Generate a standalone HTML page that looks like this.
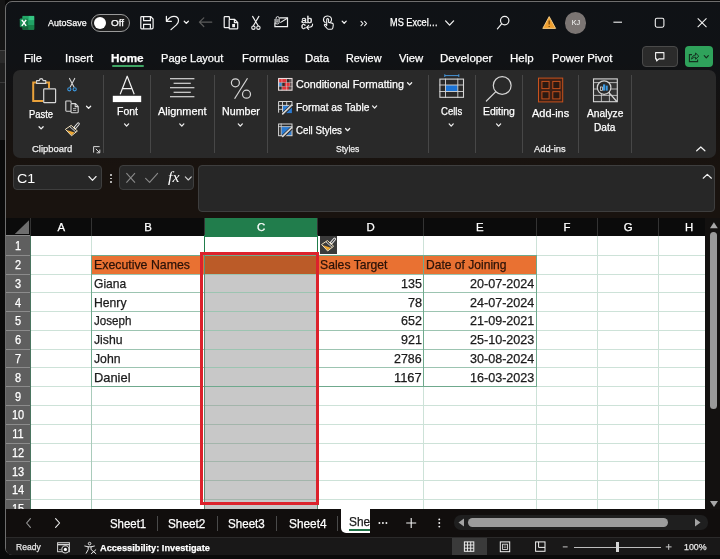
<!DOCTYPE html>
<html><head><meta charset="utf-8"><title>Excel</title>
<style>
html,body{margin:0;padding:0}
body{width:720px;height:559px;overflow:hidden;position:relative;background:#0a0a0a;font-family:"Liberation Sans",sans-serif}
.a{position:absolute}
.t{-webkit-text-stroke:0.25px currentColor;position:absolute;white-space:nowrap;line-height:1;transform-origin:0 50%;display:block}
svg{position:absolute;overflow:visible}
.win{left:4.5px;top:1px;width:730px;height:554px;background:linear-gradient(to bottom,#0f1216 0,#101215 60px,#15110f 120px,#19130f 165px,#19130f 100%);border:1px solid #6e6e6e;border-radius:7px;box-sizing:border-box}
.ribbon{left:12.5px;top:70px;width:703px;height:87.6px;background:#292929;border-radius:7px}
.sep{width:1px;background:#474747;top:75px;height:77.5px}
.box{background:#272727;border:1px solid #3e3e3e;border-radius:4px;box-sizing:border-box}
.gl{background:#cfe3da}
.gd{background:#7fb09a}

</style></head><body>
<div class="a " style="left:0.00px;top:0.00px;width:4.50px;height:50.00px;background:#151515;"></div>
<div class="a " style="left:0.00px;top:50.00px;width:4.50px;height:13.00px;background:#2a2a2a;"></div>
<div class="a " style="left:0.00px;top:63.00px;width:4.50px;height:77.00px;background:#1f1f1f;"></div>
<div class="a " style="left:0.00px;top:82.00px;width:4.50px;height:0.80px;background:#3a3a3a;"></div>
<div class="a " style="left:0.00px;top:50.00px;width:4.50px;height:0.80px;background:#444;"></div>
<div class="a win"></div>
<div class="a ribbon"></div>
<div class="a sep" style="left:102.7px"></div>
<div class="a sep" style="left:150.2px"></div>
<div class="a sep" style="left:213.7px"></div>
<div class="a sep" style="left:267.0px"></div>
<div class="a sep" style="left:427.5px"></div>
<div class="a sep" style="left:475.0px"></div>
<div class="a sep" style="left:522.0px"></div>
<div class="a sep" style="left:577.7px"></div>
<div class="a sep" style="left:631.3px"></div>
<div class="a " style="left:111.60px;top:65.10px;width:32.90px;height:2.30px;background:#3fa564;border-radius:1.2px"></div>
<div class="a" style="left:91.2px;top:14.3px;width:38.8px;height:17.6px;border:1.3px solid #9a9a9a;border-radius:9px;box-sizing:border-box;background:#1c1c1c"></div>
<div class="a" style="left:94px;top:17px;width:12.4px;height:12.4px;border-radius:50%;background:#fff"></div>
<div class="a" style="left:564.8px;top:12.3px;width:21.4px;height:21.4px;border-radius:50%;background:#7b7573"></div>
<div class="a" style="left:641.7px;top:46.3px;width:36px;height:21.2px;border-radius:4px;background:#2b2b2b;border:1px solid #4a4a4a;box-sizing:border-box"></div>
<div class="a" style="left:685px;top:46.3px;width:27.5px;height:21.2px;border-radius:4px;background:#2fa25b"></div>
<div class="a box" style="left:12.7px;top:165px;width:89px;height:25px"></div>
<div class="a box" style="left:119.3px;top:165px;width:75px;height:25px"></div>
<div class="a box" style="left:198.3px;top:165px;width:517.2px;height:46.5px"></div>
<div class="a " style="left:110.00px;top:174.30px;width:1.60px;height:1.60px;background:#d0d0d0;border-radius:50%"></div>
<div class="a " style="left:110.00px;top:177.80px;width:1.60px;height:1.60px;background:#d0d0d0;border-radius:50%"></div>
<div class="a " style="left:110.00px;top:181.30px;width:1.60px;height:1.60px;background:#d0d0d0;border-radius:50%"></div>
<div class="a " style="left:6.00px;top:217.60px;width:714.00px;height:291.60px;background:#fff;"></div>
<div class="a " style="left:6.00px;top:217.60px;width:714.00px;height:18.00px;background:#0b0b0b;"></div>
<div class="a " style="left:204.30px;top:217.60px;width:113.40px;height:18.00px;background:#217d4c;"></div>
<div class="a " style="left:30.20px;top:217.60px;width:1.00px;height:18.00px;background:#333;"></div>
<div class="a " style="left:91.20px;top:217.60px;width:1.00px;height:18.00px;background:#333;"></div>
<div class="a " style="left:203.80px;top:217.60px;width:1.00px;height:18.00px;background:#333;"></div>
<div class="a " style="left:317.20px;top:217.60px;width:1.00px;height:18.00px;background:#333;"></div>
<div class="a " style="left:423.00px;top:217.60px;width:1.00px;height:18.00px;background:#333;"></div>
<div class="a " style="left:535.90px;top:217.60px;width:1.00px;height:18.00px;background:#333;"></div>
<div class="a " style="left:597.30px;top:217.60px;width:1.00px;height:18.00px;background:#333;"></div>
<div class="a " style="left:658.20px;top:217.60px;width:1.00px;height:18.00px;background:#333;"></div>
<svg style="left:14px;top:219px" width="16" height="16" viewBox="14 219 16 16"><path d="M14.8 233.9 L29 233.9 L29 220.3 Z" fill="#6e6e6e"/></svg>
<div class="a " style="left:6.00px;top:235.60px;width:24.40px;height:273.60px;background:#5f5f5f;"></div>
<div class="a " style="left:6.00px;top:235.20px;width:24.40px;height:0.90px;background:#8a8a8a;"></div>
<div class="a " style="left:6.00px;top:254.78px;width:24.40px;height:1.00px;background:#8c8c8c;"></div>
<div class="a " style="left:6.00px;top:273.56px;width:24.40px;height:1.00px;background:#8c8c8c;"></div>
<div class="a " style="left:6.00px;top:292.34px;width:24.40px;height:1.00px;background:#8c8c8c;"></div>
<div class="a " style="left:6.00px;top:311.12px;width:24.40px;height:1.00px;background:#8c8c8c;"></div>
<div class="a " style="left:6.00px;top:329.90px;width:24.40px;height:1.00px;background:#8c8c8c;"></div>
<div class="a " style="left:6.00px;top:348.68px;width:24.40px;height:1.00px;background:#8c8c8c;"></div>
<div class="a " style="left:6.00px;top:367.46px;width:24.40px;height:1.00px;background:#8c8c8c;"></div>
<div class="a " style="left:6.00px;top:386.24px;width:24.40px;height:1.00px;background:#8c8c8c;"></div>
<div class="a " style="left:6.00px;top:405.02px;width:24.40px;height:1.00px;background:#8c8c8c;"></div>
<div class="a " style="left:6.00px;top:423.80px;width:24.40px;height:1.00px;background:#8c8c8c;"></div>
<div class="a " style="left:6.00px;top:442.58px;width:24.40px;height:1.00px;background:#8c8c8c;"></div>
<div class="a " style="left:6.00px;top:461.36px;width:24.40px;height:1.00px;background:#8c8c8c;"></div>
<div class="a " style="left:6.00px;top:480.14px;width:24.40px;height:1.00px;background:#8c8c8c;"></div>
<div class="a " style="left:6.00px;top:498.92px;width:24.40px;height:1.00px;background:#8c8c8c;"></div>
<div class="a " style="left:30.20px;top:235.60px;width:1.00px;height:273.60px;background:#4a7560;"></div>
<div class="a " style="left:91.70px;top:255.28px;width:112.60px;height:18.78px;background:#e97132;"></div>
<div class="a " style="left:317.70px;top:255.28px;width:218.70px;height:18.78px;background:#e97132;"></div>
<div class="a " style="left:204.30px;top:255.28px;width:113.40px;height:18.78px;background:#bb5b28;"></div>
<div class="a " style="left:204.30px;top:274.06px;width:113.40px;height:235.14px;background:#c8c8c8;"></div>
<div class="a " style="left:30.70px;top:254.78px;width:675.30px;height:1.00px;background:#cde2d8;"></div>
<div class="a " style="left:30.70px;top:273.56px;width:675.30px;height:1.00px;background:#cde2d8;"></div>
<div class="a " style="left:30.70px;top:292.34px;width:675.30px;height:1.00px;background:#cde2d8;"></div>
<div class="a " style="left:30.70px;top:311.12px;width:675.30px;height:1.00px;background:#cde2d8;"></div>
<div class="a " style="left:30.70px;top:329.90px;width:675.30px;height:1.00px;background:#cde2d8;"></div>
<div class="a " style="left:30.70px;top:348.68px;width:675.30px;height:1.00px;background:#cde2d8;"></div>
<div class="a " style="left:30.70px;top:367.46px;width:675.30px;height:1.00px;background:#cde2d8;"></div>
<div class="a " style="left:30.70px;top:386.24px;width:675.30px;height:1.00px;background:#cde2d8;"></div>
<div class="a " style="left:30.70px;top:405.02px;width:675.30px;height:1.00px;background:#cde2d8;"></div>
<div class="a " style="left:30.70px;top:423.80px;width:675.30px;height:1.00px;background:#cde2d8;"></div>
<div class="a " style="left:30.70px;top:442.58px;width:675.30px;height:1.00px;background:#cde2d8;"></div>
<div class="a " style="left:30.70px;top:461.36px;width:675.30px;height:1.00px;background:#cde2d8;"></div>
<div class="a " style="left:30.70px;top:480.14px;width:675.30px;height:1.00px;background:#cde2d8;"></div>
<div class="a " style="left:30.70px;top:498.92px;width:675.30px;height:1.00px;background:#cde2d8;"></div>
<div class="a " style="left:91.20px;top:235.60px;width:1.00px;height:273.60px;background:#cde2d8;"></div>
<div class="a " style="left:203.80px;top:235.60px;width:1.00px;height:273.60px;background:#cde2d8;"></div>
<div class="a " style="left:317.20px;top:235.60px;width:1.00px;height:273.60px;background:#cde2d8;"></div>
<div class="a " style="left:423.00px;top:235.60px;width:1.00px;height:273.60px;background:#cde2d8;"></div>
<div class="a " style="left:535.90px;top:235.60px;width:1.00px;height:273.60px;background:#cde2d8;"></div>
<div class="a " style="left:597.30px;top:235.60px;width:1.00px;height:273.60px;background:#cde2d8;"></div>
<div class="a " style="left:658.20px;top:235.60px;width:1.00px;height:273.60px;background:#cde2d8;"></div>
<div class="a " style="left:204.30px;top:273.56px;width:113.40px;height:1.00px;background:#a3b5ab;"></div>
<div class="a " style="left:204.30px;top:292.34px;width:113.40px;height:1.00px;background:#a3b5ab;"></div>
<div class="a " style="left:204.30px;top:311.12px;width:113.40px;height:1.00px;background:#a3b5ab;"></div>
<div class="a " style="left:204.30px;top:329.90px;width:113.40px;height:1.00px;background:#a3b5ab;"></div>
<div class="a " style="left:204.30px;top:348.68px;width:113.40px;height:1.00px;background:#a3b5ab;"></div>
<div class="a " style="left:204.30px;top:367.46px;width:113.40px;height:1.00px;background:#a3b5ab;"></div>
<div class="a " style="left:204.30px;top:386.24px;width:113.40px;height:1.00px;background:#a3b5ab;"></div>
<div class="a " style="left:204.30px;top:405.02px;width:113.40px;height:1.00px;background:#a3b5ab;"></div>
<div class="a " style="left:204.30px;top:423.80px;width:113.40px;height:1.00px;background:#a3b5ab;"></div>
<div class="a " style="left:204.30px;top:442.58px;width:113.40px;height:1.00px;background:#a3b5ab;"></div>
<div class="a " style="left:204.30px;top:461.36px;width:113.40px;height:1.00px;background:#a3b5ab;"></div>
<div class="a " style="left:204.30px;top:480.14px;width:113.40px;height:1.00px;background:#a3b5ab;"></div>
<div class="a " style="left:204.30px;top:498.92px;width:113.40px;height:1.00px;background:#a3b5ab;"></div>
<div class="a " style="left:91.70px;top:254.78px;width:444.70px;height:1.00px;background:#6fa98d;"></div>
<div class="a " style="left:91.70px;top:273.56px;width:444.70px;height:1.00px;background:#9cc4b1;"></div>
<div class="a " style="left:91.70px;top:292.34px;width:444.70px;height:1.00px;background:#9cc4b1;"></div>
<div class="a " style="left:91.70px;top:311.12px;width:444.70px;height:1.00px;background:#9cc4b1;"></div>
<div class="a " style="left:91.70px;top:329.90px;width:444.70px;height:1.00px;background:#9cc4b1;"></div>
<div class="a " style="left:91.70px;top:348.68px;width:444.70px;height:1.00px;background:#9cc4b1;"></div>
<div class="a " style="left:91.70px;top:367.46px;width:444.70px;height:1.00px;background:#9cc4b1;"></div>
<div class="a " style="left:91.70px;top:386.24px;width:444.70px;height:1.00px;background:#6fa98d;"></div>
<div class="a " style="left:91.20px;top:255.28px;width:1.00px;height:131.46px;background:#6fa98d;"></div>
<div class="a " style="left:203.80px;top:255.28px;width:1.00px;height:131.46px;background:#6fa98d;"></div>
<div class="a " style="left:317.20px;top:255.28px;width:1.00px;height:131.46px;background:#6fa98d;"></div>
<div class="a " style="left:423.00px;top:255.28px;width:1.00px;height:131.46px;background:#6fa98d;"></div>
<div class="a " style="left:535.90px;top:255.28px;width:1.00px;height:131.46px;background:#6fa98d;"></div>
<div class="a " style="left:91.20px;top:386.74px;width:1.00px;height:122.46px;background:#a9cbbb;"></div>
<div class="a " style="left:203.80px;top:255.28px;width:1.00px;height:253.92px;background:#5c8f76;"></div>
<div class="a " style="left:317.20px;top:255.28px;width:1.00px;height:253.92px;background:#5c8f76;"></div>
<div class="a " style="left:204.30px;top:236.00px;width:113.40px;height:19.28px;background:#fff;"></div>
<div class="a " style="left:204.30px;top:235.20px;width:114.00px;height:2.00px;background:#217d4c;"></div>
<div class="a " style="left:203.80px;top:235.60px;width:1.30px;height:19.68px;background:#217d4c;"></div>
<div class="a " style="left:317.10px;top:235.60px;width:1.30px;height:17.68px;background:#217d4c;"></div>
<div class="a" style="left:200.1px;top:251.9px;width:119.2px;height:253px;border:3.6px solid #dc222c;box-sizing:border-box"></div>
<div class="a " style="left:320.00px;top:236.30px;width:17.00px;height:17.40px;background:#3b3b3b;"></div>
<div class="a " style="left:705.40px;top:217.60px;width:14.60px;height:291.60px;background:#131110;"></div>
<div class="a " style="left:710.00px;top:232.20px;width:7.20px;height:176.70px;background:#999;border-radius:3.6px"></div>
<svg style="left:706px;top:218px" width="14" height="14" viewBox="706 218 14 14"><path d="M710 228.2 L713.9 222.2 L717.8 228.2 Z" fill="#a8a8a8"/></svg>
<svg style="left:706px;top:496px" width="14" height="14" viewBox="706 496 14 14"><path d="M710 501 L714 507 L718 501 Z" fill="#a8a8a8"/></svg>
<div class="a " style="left:6.00px;top:509.20px;width:714.00px;height:28.00px;background:#110e0d;"></div>
<div class="a " style="left:6.00px;top:537.00px;width:714.00px;height:17.50px;background:#191818;border-radius:0 0 0 6px"></div>
<div class="a " style="left:6.00px;top:537.00px;width:714.00px;height:0.80px;background:#2b2a2a;"></div>
<div class="a " style="left:156.80px;top:516.00px;width:1.00px;height:14.50px;background:#4a4a4a;"></div>
<div class="a " style="left:216.50px;top:516.00px;width:1.00px;height:14.50px;background:#4a4a4a;"></div>
<div class="a " style="left:276.20px;top:516.00px;width:1.00px;height:14.50px;background:#4a4a4a;"></div>
<div class="a " style="left:336.50px;top:516.00px;width:1.00px;height:14.50px;background:#4a4a4a;"></div>
<div class="a" style="left:340.7px;top:509.2px;width:28.5px;height:24px;background:#fff;border-radius:0 0 0 5px;overflow:hidden;will-change:transform"><span style="position:absolute;left:7.6px;top:6.8px;font-size:12.5px;-webkit-text-stroke:0.25px #1a1a1a;line-height:1;color:#1a1a1a;white-space:nowrap;transform:scaleX(0.95);transform-origin:0 50%">Sheet5</span><div style="position:absolute;left:8px;top:20.3px;width:40px;height:1.8px;background:#1e7145"></div></div>
<div class="a " style="left:453.60px;top:515.00px;width:254.40px;height:14.80px;background:#1f1f1f;border-radius:7px"></div>
<div class="a " style="left:468.00px;top:518.00px;width:199.50px;height:8.70px;background:#9c9c9c;border-radius:4.5px"></div>
<svg style="left:456px;top:517px" width="10" height="11" viewBox="0 0 10 11"><path d="M8 1.5 L2.5 5.5 L8 9.5 Z" fill="#a4a4a4"/></svg>
<svg style="left:693px;top:517px" width="10" height="11" viewBox="0 0 10 11"><path d="M2 1.5 L7.5 5.5 L2 9.5 Z" fill="#a4a4a4"/></svg>
<div class="a " style="left:451.70px;top:537.50px;width:35.00px;height:17.00px;background:#3a3a3a;"></div>
<div class="a " style="left:574.20px;top:546.70px;width:86.80px;height:1.00px;background:#bdbdbd;"></div>
<div class="a " style="left:615.60px;top:542.00px;width:3.60px;height:10.40px;background:#d6d6d6;"></div>
<svg width="720" height="559" viewBox="0 0 720 559" style="left:0;top:0" fill="none">
<defs><linearGradient id="xg" x1="0" y1="0" x2="1" y2="1"><stop offset="0" stop-color="#1f9d61"/><stop offset="1" stop-color="#0f6f3b"/></linearGradient></defs>
<rect x="22.5" y="15.9" width="11.7" height="13.8" rx="1" fill="#1a8f55"/>
<rect x="28.3" y="15.9" width="5.9" height="4.6" fill="#35c583"/>
<rect x="22.5" y="15.9" width="5.8" height="4.6" fill="#23a868"/>
<rect x="28.3" y="20.5" width="5.9" height="4.6" fill="#21a366"/>
<rect x="28.3" y="25.1" width="5.9" height="4.6" fill="#178048"/>
<rect x="22.5" y="25.1" width="5.8" height="4.6" fill="#175d38"/>
<rect x="19.8" y="18.4" width="8.2" height="8.9" rx="0.8" fill="url(#xg)"/>
<path d="M21.8 19.9 L26.2 25.9 M26.2 19.9 L21.8 25.9" stroke="#fff" stroke-width="1.45"/>
<path d="M141.6 16.7 H150.8 L153.1 19 V27.6 Q153.1 28.9 151.8 28.9 H141.6 Q140.8 28.9 140.8 28.1 V17.5 Q140.8 16.7 141.6 16.7 Z" stroke="#f2f2f2" stroke-width="1.2"/>
<path d="M143.6 16.9 V20.6 H150.4 V16.9 M143.6 28.8 V24.3 H150.4 V28.8" stroke="#f2f2f2" stroke-width="1.2"/>
<path d="M166.4 16.4 V21.3 H171.4" stroke="#f2f2f2" stroke-width="1.25" stroke-linecap="round" stroke-linejoin="round"/>
<path d="M166.8 20.9 C169 17.6 171.7 16.4 174 16.4 C176.8 16.4 178.5 18.4 178.5 20.8 C178.5 22.6 177.6 23.7 176.4 24.9 L171 29.6" stroke="#f2f2f2" stroke-width="1.25" stroke-linecap="round"/>
<path d="M184.25 21.20 L186.30 23.40 L188.35 21.20" stroke="#f2f2f2" stroke-width="1.25" fill="none" stroke-linecap="round" stroke-linejoin="round"/>
<path d="M199.4 22.1 H211.8 M203.8 17.9 L199.4 22.1 L203.8 26.5" stroke="#5c5c5c" stroke-width="1.2" stroke-linecap="round" stroke-linejoin="round"/>
<path d="M229.4 27.6 H224.9 Q224.2 27.6 224.2 26.9 V17.4 Q224.2 16.7 224.9 16.7 H228.7 Q229.4 16.7 229.4 17.4 V19" stroke="#f2f2f2" stroke-width="1.2"/>
<path d="M229.9 19.4 H234.6 L237.7 22.5 V28.2 Q237.7 28.9 237 28.9 H229.9 Q229.2 28.9 229.2 28.2 V20.1 Q229.2 19.4 229.9 19.4 Z M234.4 19.6 V22.7 H237.5" stroke="#f2f2f2" stroke-width="1.2"/>
<rect x="232.2" y="24" width="2.8" height="3.2" fill="#f2f2f2"/>
<path d="M252.6 16.4 L258.3 26 M258.9 16.4 L253.2 26" stroke="#f2f2f2" stroke-width="1.15" stroke-linecap="round"/>
<circle cx="253.4" cy="27.7" r="1.7" stroke="#f2f2f2" stroke-width="1.1"/><circle cx="258.4" cy="27.7" r="1.7" stroke="#f2f2f2" stroke-width="1.1"/>
<path d="M279.5 17.9 H287.5 V26.6 H274.9 V22.5" stroke="#f2f2f2" stroke-width="1.2"/>
<path d="M287.3 18.2 L280.3 22.6" stroke="#f2f2f2" stroke-width="1.1"/>
<path d="M277.9 19 V21.3 Q277.9 22.3 277 22.3 Q276.1 22.3 276.1 21.3 V18.2 Q276.1 16.6 277.6 16.6 Q279.2 16.6 279.2 18.2 V22 Q279.2 24 277.2 24 Q275 24 275 22 V19" stroke="#f2f2f2" stroke-width="0.9"/>
<text x="301.3" y="22.9" font-family="Liberation Sans, sans-serif" font-size="9.6" fill="#f2f2f2" stroke="#f2f2f2" stroke-width="0.35" textLength="11" lengthAdjust="spacingAndGlyphs">ab</text>
<text x="301.3" y="28.6" font-family="Liberation Sans, sans-serif" font-size="9" fill="#f2f2f2" stroke="#f2f2f2" stroke-width="0.35">c</text>
<path d="M312.6 24 Q312.6 27.3 309 27.3 H306.8 M308.7 25.3 L306.6 27.3 L308.7 29.3" stroke="#f2f2f2" stroke-width="1.1" stroke-linecap="round" stroke-linejoin="round"/>
<path d="M325.2 22.6 C323.6 21.5 323.2 19.8 323.7 18.4 C324.4 16.6 326.2 15.9 327.8 16 C330.2 16.1 331.7 17.9 331.5 19.9 C331.4 20.8 331 21.5 330.6 21.9" stroke="#f2f2f2" stroke-width="1.1" stroke-linecap="round"/>
<path d="M326.7 25.6 V19.6 Q326.7 18.6 327.6 18.6 Q328.6 18.6 328.6 19.6 V22.4 L332 23.1 Q333.4 23.5 333.3 24.9 L332.8 28 Q332.6 29.2 331.4 29.2 H328.6 Q327.7 29.2 327.1 28.5 L324.6 25.6 Q324 24.7 324.9 24.3 Q325.6 24.1 326.7 25.6 Z" stroke="#f2f2f2" stroke-width="1.1" stroke-linejoin="round"/>
<path d="M342.15 21.10 L344.20 23.30 L346.25 21.10" stroke="#f2f2f2" stroke-width="1.25" fill="none" stroke-linecap="round" stroke-linejoin="round"/>
<path d="M361 21.3 L363 23.5 L361 25.7 M364.6 21.3 L366.6 23.5 L364.6 25.7" stroke="#f2f2f2" stroke-width="1.1" stroke-linecap="round" stroke-linejoin="round"/>
<path d="M445.60 20.90 L449.60 25.10 L453.60 20.90" stroke="#f2f2f2" stroke-width="1.3" fill="none" stroke-linecap="round" stroke-linejoin="round"/>
<circle cx="504.7" cy="20.6" r="4.2" stroke="#f2f2f2" stroke-width="1.2"/><path d="M501.6 23.8 L497.4 28.8" stroke="#f2f2f2" stroke-width="1.2" stroke-linecap="round"/>
<path d="M549.2 16.6 L555.6 28.4 H542.8 Z" fill="#f0a030" stroke="#fbd48f" stroke-width="0.9" stroke-linejoin="round"/>
<path d="M549.2 20.4 V24.6 M549.2 26 V27" stroke="#7a4a10" stroke-width="1.3"/>
<path d="M613.4 22.2 H622" stroke="#f2f2f2" stroke-width="1.1"/>
<rect x="655.3" y="18.3" width="8.6" height="8.9" rx="1.6" stroke="#f2f2f2" stroke-width="1.1"/>
<path d="M697.7 18.4 L706.5 27.2 M706.5 18.4 L697.7 27.2" stroke="#f2f2f2" stroke-width="1.1"/>
<path d="M655.6 52.6 H663.9 V58.9 H658.9 L656.6 61 V58.9 H655.6 Z" stroke="#f2f2f2" stroke-width="1.1" stroke-linejoin="round"/>
<path d="M692 54.6 H689.4 V61.6 H697.6 V59.6" stroke="#14301f" stroke-width="1.1"/>
<path d="M691.6 59.2 C691.9 56.4 693.6 55.2 695.6 55.1 V53 L698.8 56.2 L695.6 59.2 V57.2 C694 57.2 692.7 57.8 691.6 59.2 Z" stroke="#14301f" stroke-width="1" stroke-linejoin="round"/>
<path d="M704.25 55.60 L706.30 57.80 L708.35 55.60" stroke="#14301f" stroke-width="1.2" fill="none" stroke-linecap="round" stroke-linejoin="round"/>
<path d="M36.6 82.4 H33.2 V101 H43" stroke="#e9a23b" stroke-width="2"/>
<path d="M45.8 82.4 H49 V88" stroke="#e9a23b" stroke-width="2"/>
<path d="M36.6 83.4 V80.6 H39.3 Q39.5 78.6 41.2 78.6 Q42.9 78.6 43.1 80.6 H45.8 V83.4 Z" stroke="#d6d6d6" stroke-width="1.1" stroke-linejoin="round"/>
<rect x="43.7" y="88.8" width="11.9" height="13.9" rx="0.8" stroke="#d6d6d6" stroke-width="1.2" fill="#292929"/>
<path d="M39.05 126.70 L41.10 128.90 L43.15 126.70" stroke="#f2f2f2" stroke-width="1.25" fill="none" stroke-linecap="round" stroke-linejoin="round"/>
<path d="M69.5 78.4 L74 87 M74.7 78.4 L70.2 87" stroke="#d6d6d6" stroke-width="1.1" stroke-linecap="round"/>
<circle cx="69.3" cy="89.3" r="1.6" stroke="#3c99e0" stroke-width="1.1"/><circle cx="74.7" cy="89.3" r="1.6" stroke="#3c99e0" stroke-width="1.1"/>
<path d="M71 111.2 H66.4 Q65.8 111.2 65.8 110.6 V101.6 Q65.8 101 66.4 101 H70.4 Q71 101 71 101.6 V103" stroke="#d6d6d6" stroke-width="1.1"/>
<path d="M71.6 103.6 H75.4 L78.2 106.4 V112.1 Q78.2 112.7 77.6 112.7 H71.6 Q71 112.7 71 112.1 V104.2 Q71 103.6 71.6 103.6 Z M75.2 103.8 V106.6 H78" stroke="#d6d6d6" stroke-width="1.1"/>
<path d="M73 108.6 H76.2 M73 110.4 H76.2" stroke="#d6d6d6" stroke-width="0.8"/>
<path d="M86.55 106.20 L88.60 108.40 L90.65 106.20" stroke="#f2f2f2" stroke-width="1.25" fill="none" stroke-linecap="round" stroke-linejoin="round"/>
<path d="M78.30 123.90 L75.00 127.80" stroke="#e9e9e9" stroke-width="3.00" stroke-linecap="round"/><path d="M78.30 123.90 L75.40 127.30" stroke="#292929" stroke-width="1.10" stroke-linecap="round"/><path d="M66.60 130.00 L74.60 132.60 L71.50 135.20 Z" fill="#f0a832"/><path d="M65.40 129.30 L71.20 125.40 L77.40 131.00 L71.50 135.80 Z" stroke="#f4e2bb" stroke-width="1.00" stroke-linejoin="round" fill="none"/><path d="M69.80 126.60 L76.00 132.20" stroke="#e9e9e9" stroke-width="0.90"/>
<path d="M99.6 146.6 H93.6 V152.6" stroke="#d6d6d6" stroke-width="1"/><path d="M95.8 148.8 L99.6 152.6 M99.8 149.6 V152.8 H96.6" stroke="#d6d6d6" stroke-width="1"/>
<path d="M120.2 94.2 L127.2 76.2 L134.2 94.2 M122.6 88.6 H131.8" stroke="#f2f2f2" stroke-width="1.2" stroke-linejoin="round"/>
<rect x="112.8" y="95.8" width="28.4" height="6.3" fill="#fff"/>
<path d="M124.55 123.90 L126.60 126.10 L128.65 123.90" stroke="#f2f2f2" stroke-width="1.25" fill="none" stroke-linecap="round" stroke-linejoin="round"/>
<path d="M170 78.7 H194.4" stroke="#d6d6d6" stroke-width="1.2"/>
<path d="M173.6 83.3 H190.8" stroke="#d6d6d6" stroke-width="1.2"/>
<path d="M170 87.7 H194.4" stroke="#d6d6d6" stroke-width="1.2"/>
<path d="M173.6 92.3 H190.8" stroke="#d6d6d6" stroke-width="1.2"/>
<path d="M170 96.7 H194.4" stroke="#d6d6d6" stroke-width="1.2"/>
<path d="M179.75 123.90 L181.80 126.10 L183.85 123.90" stroke="#f2f2f2" stroke-width="1.25" fill="none" stroke-linecap="round" stroke-linejoin="round"/>
<circle cx="235.4" cy="82.8" r="4" stroke="#d6d6d6" stroke-width="1.2"/><circle cx="246.5" cy="94.2" r="4" stroke="#d6d6d6" stroke-width="1.2"/><path d="M247.5 78.2 L234.6 98.7" stroke="#d6d6d6" stroke-width="1.2"/>
<path d="M238.25 123.90 L240.30 126.10 L242.35 123.90" stroke="#f2f2f2" stroke-width="1.25" fill="none" stroke-linecap="round" stroke-linejoin="round"/>
<rect x="278.6" y="78.5" width="13.4" height="11.7" fill="#2c2c2c"/>
<rect x="278.70000000000005" y="78.8" width="8" height="3.6" fill="#e3353a"/>
<rect x="278.90000000000003" y="82.8" width="2.8" height="3.4" fill="#3f8fdc"/><rect x="284.70000000000005" y="82.8" width="5.4" height="3.4" fill="#e3353a"/>
<rect x="282.1" y="86.5" width="6.6" height="3.4" fill="#e3353a"/>
<path d="M281.90000000000003 78 V90.7 M286.5 78 V90.7 M290.0 78 V90.7 M278.1 82.5 H292.5 M278.1 86.4 H292.5" stroke="#e8d8d8" stroke-width="0.55" opacity="0.8"/>
<rect x="278.6" y="78.5" width="13.4" height="11.7" stroke="#eadcdc" stroke-width="1.1"/>
<rect x="282.5" y="105.4" width="9.4" height="7.699999999999999" fill="#2b7bd1"/>
<path d="M282.5 101 V113.7 M286.70000000000005 101 V106 M278.1 105.4 H292.5 M278.1 109.3 H283.1" stroke="#d6d6d6" stroke-width="0.9"/>
<path d="M278.6 112.7 V101.5 H292.0 V106" stroke="#d6d6d6" stroke-width="1"/>
<path d="M283.1 113.7 L291.5 105.6" stroke="#292929" stroke-width="3.4"/><path d="M282.70000000000005 113.9 L291.70000000000005 105.2" stroke="#d6d6d6" stroke-width="1.6" stroke-linecap="round"/>
<rect x="281.3" y="126.7" width="10.4" height="8.7" fill="#2b7bd1"/>
<rect x="278.6" y="124.0" width="13.4" height="11.7" stroke="#d6d6d6" stroke-width="1"/><path d="M281.20000000000005 123.5 V136.2 M278.1 126.6 H292.5" stroke="#d6d6d6" stroke-width="0.8"/>
<path d="M283.1 136.2 L291.5 128.1" stroke="#292929" stroke-width="3.4"/><path d="M282.70000000000005 136.39999999999998 L291.70000000000005 127.7" stroke="#d6d6d6" stroke-width="1.6" stroke-linecap="round"/>
<path d="M407.55 82.70 L409.60 84.90 L411.65 82.70" stroke="#f2f2f2" stroke-width="1.25" fill="none" stroke-linecap="round" stroke-linejoin="round"/>
<path d="M372.55 105.90 L374.60 108.10 L376.65 105.90" stroke="#f2f2f2" stroke-width="1.25" fill="none" stroke-linecap="round" stroke-linejoin="round"/>
<path d="M345.55 128.50 L347.60 130.70 L349.65 128.50" stroke="#f2f2f2" stroke-width="1.25" fill="none" stroke-linecap="round" stroke-linejoin="round"/>
<rect x="445.5" y="85" width="12.3" height="6.5" fill="#1b73d4"/>
<path d="M439.4 85 H464 M439.4 91.5 H464 M445.5 78.6 V97.8 M457.8 78.6 V97.8" stroke="#d6d6d6" stroke-width="0.9"/>
<rect x="439.9" y="79.1" width="23.6" height="18.2" stroke="#d6d6d6" stroke-width="1.1"/>
<path d="M444.8 75.6 H458.8 M444.8 74.2 V77 M458.8 74.2 V77" stroke="#4a9fe8" stroke-width="0.9"/>
<path d="M449.15 123.90 L451.20 126.10 L453.25 123.90" stroke="#f2f2f2" stroke-width="1.25" fill="none" stroke-linecap="round" stroke-linejoin="round"/>
<circle cx="502.2" cy="85.5" r="8.9" stroke="#d6d6d6" stroke-width="1.2"/><path d="M495.6 91.8 L486.4 101" stroke="#d6d6d6" stroke-width="1.2" stroke-linecap="round"/>
<path d="M496.55 123.90 L498.60 126.10 L500.65 123.90" stroke="#f2f2f2" stroke-width="1.25" fill="none" stroke-linecap="round" stroke-linejoin="round"/>
<rect x="538.5" y="78.1" width="24.2" height="23.8" fill="#3e2015" stroke="#c9521d" stroke-width="1"/>
<rect x="541.9" y="81.4" width="7.2" height="7.2" fill="#2c1911" stroke="#c9521d" stroke-width="0.95"/>
<rect x="541.9" y="91.7" width="7.2" height="7.2" fill="#2c1911" stroke="#c9521d" stroke-width="0.95"/>
<rect x="552.8" y="81.4" width="7.2" height="7.2" fill="#2c1911" stroke="#c9521d" stroke-width="0.95"/>
<rect x="552.8" y="91.7" width="7.2" height="7.2" fill="#2c1911" stroke="#c9521d" stroke-width="0.95"/>
<rect x="593.5" y="78.9" width="23.8" height="22.8" stroke="#d6d6d6" stroke-width="1.1" fill="#333"/>
<path d="M593.5 82.6 H617.3 M593.5 89 H617.3 M593.5 95.4 H617.3 M601.4 82.6 V101.7 M609.4 82.6 V101.7" stroke="#d6d6d6" stroke-width="0.8"/>
<circle cx="604.1" cy="87.6" r="6.8" fill="#2a2a2a" stroke="#d6d6d6" stroke-width="1.2"/>
<rect x="600.6" y="87" width="1.8" height="3.6" fill="none" stroke="#e8e8e8" stroke-width="0.7"/><rect x="603" y="84.4" width="2.2" height="6.2" fill="#3c99e0"/><rect x="605.8" y="85.6" width="1.9" height="5" fill="#3c99e0"/>
<path d="M609 92.6 L616.6 101.2" stroke="#d6d6d6" stroke-width="1.3" stroke-linecap="round"/>
<path d="M696.7 150.8 L700.8 147 L704.9 150.8" stroke="#f2f2f2" stroke-width="1.2" stroke-linecap="round" stroke-linejoin="round"/>
<path d="M88.90 176.50 L92.50 180.30 L96.10 176.50" stroke="#f2f2f2" stroke-width="1.1" fill="none" stroke-linecap="round" stroke-linejoin="round"/>
<path d="M126.4 173.2 L135 182.6 M135 173.2 L126.4 182.6" stroke="#8a8a8a" stroke-width="1.1"/>
<path d="M145.6 178.4 L149.6 182.4 L157.6 173.4" stroke="#8a8a8a" stroke-width="1.1" stroke-linecap="round" stroke-linejoin="round"/>
<path d="M185.30 176.80 L188.30 180.00 L191.30 176.80" stroke="#d0d0d0" stroke-width="1.1" fill="none" stroke-linecap="round" stroke-linejoin="round"/>
<path d="M703.2 178.2 L707.3 174.4 L711.4 178.2" stroke="#f2f2f2" stroke-width="1.2" stroke-linecap="round" stroke-linejoin="round"/>
<path d="M334.50 239.10 L331.20 243.00" stroke="#e9e9e9" stroke-width="3.00" stroke-linecap="round"/><path d="M334.50 239.10 L331.60 242.50" stroke="#3b3b3b" stroke-width="1.10" stroke-linecap="round"/><path d="M322.80 245.20 L330.80 247.80 L327.70 250.40 Z" fill="#f0a832"/><path d="M321.60 244.50 L327.40 240.60 L333.60 246.20 L327.70 251.00 Z" stroke="#f4e2bb" stroke-width="1.00" stroke-linejoin="round" fill="none"/><path d="M326.00 241.80 L332.20 247.40" stroke="#e9e9e9" stroke-width="0.90"/>
<path d="M30.4 518.6 L26.6 523 L30.4 527.4" stroke="#9a9a9a" stroke-width="1.1" stroke-linecap="round" stroke-linejoin="round"/>
<path d="M55.6 518.6 L59.6 523 L55.6 527.4" stroke="#f2f2f2" stroke-width="1.1" stroke-linecap="round" stroke-linejoin="round"/>
<circle cx="379.4" cy="523" r="0.95" fill="#f2f2f2"/>
<circle cx="382.9" cy="523" r="0.95" fill="#f2f2f2"/>
<circle cx="386.4" cy="523" r="0.95" fill="#f2f2f2"/>
<path d="M406.2 523 H416.2 M411.2 518 V528" stroke="#f2f2f2" stroke-width="1.1"/>
<circle cx="439.3" cy="519.4" r="0.95" fill="#f2f2f2"/>
<circle cx="439.3" cy="523" r="0.95" fill="#f2f2f2"/>
<circle cx="439.3" cy="526.6" r="0.95" fill="#f2f2f2"/>
<rect x="57.6" y="542.7" width="11.8" height="9" stroke="#d6d6d6" stroke-width="1"/><path d="M57.6 544.6 H69.4" stroke="#d6d6d6" stroke-width="1.4"/><path d="M59.4 549.6 H60.6" stroke="#d6d6d6" stroke-width="1"/>
<circle cx="65.4" cy="549.4" r="3.6" fill="#191818" stroke="#d6d6d6" stroke-width="1.1"/><circle cx="65.4" cy="549.4" r="1.6" fill="#fff"/>
<circle cx="89.6" cy="543.6" r="1.3" stroke="#f2f2f2" stroke-width="0.9"/>
<path d="M84.8 546 L88.2 546.8 V549.6 L86.2 553.2 M94.4 546 L91 546.8 V549.2 M88.2 546.8 H91" stroke="#f2f2f2" stroke-width="0.95" stroke-linecap="round" stroke-linejoin="round"/>
<path d="M91.4 549.8 L95.8 553.6 M95.8 549.8 L91.4 553.6" stroke="#f2f2f2" stroke-width="0.95" stroke-linecap="round"/>
<rect x="464.4" y="541.9" width="9.4" height="9.4" stroke="#f2f2f2" stroke-width="1"/><path d="M467.5 541.9 V551.3 M470.7 541.9 V551.3 M464.4 545 H473.8 M464.4 548.2 H473.8" stroke="#f2f2f2" stroke-width="0.9"/>
<rect x="500.3" y="541.9" width="9.4" height="9.8" stroke="#f2f2f2" stroke-width="1"/><rect x="502.6" y="544.2" width="4.8" height="5.2" stroke="#f2f2f2" stroke-width="0.8"/><path d="M503.6 546 H506.4 M503.6 547.6 H506.4" stroke="#f2f2f2" stroke-width="0.5"/>
<rect x="535.6" y="541.9" width="9.4" height="9.4" stroke="#f2f2f2" stroke-width="1"/><path d="M538.6 541.9 V547.4 H545" stroke="#f2f2f2" stroke-width="1"/>
<path d="M562.8 546.9 H567.6" stroke="#c8c8c8" stroke-width="1"/><path d="M665.8 546.9 H671.6 M668.7 544 V549.8" stroke="#c8c8c8" stroke-width="1"/>
</svg>
<div class="a" style="left:0;top:0;width:720px;height:559px;will-change:transform">
<span id="t0" class="t" style="left:47.5px;top:18.51px;font-size:9.2px;color:#fff;font-weight:400;font-family:'Liberation Sans', sans-serif;transform:scaleX(0.9705)">AutoSave</span>
<span id="t1" class="t" style="left:110.8px;top:18.51px;font-size:9.2px;color:#fff;font-weight:400;font-family:'Liberation Sans', sans-serif;transform:scaleX(1.0806)">Off</span>
<span id="t2" class="t" style="left:389.8px;top:18.23px;font-size:10px;color:#fff;font-weight:400;font-family:'Liberation Sans', sans-serif;transform:scaleX(0.9170)">MS Excel…</span>
<span id="t3" class="t" style="left:575.6px;top:19.47px;font-size:7.6px;color:#fff;font-weight:400;-webkit-text-stroke:0;transform-origin:50% 50%;transform:translateX(-50%) scaleX(0.95)">KJ</span>
<span id="t4" class="t" style="left:24.3px;top:52.92px;font-size:11.2px;color:#fff;font-weight:400;font-family:'Liberation Sans', sans-serif;transform:scaleX(0.9954)">File</span>
<span id="t5" class="t" style="left:65.3px;top:52.92px;font-size:11.2px;color:#fff;font-weight:400;font-family:'Liberation Sans', sans-serif;transform:scaleX(1.0094)">Insert</span>
<span id="t6" class="t" style="left:111.3px;top:52.92px;font-size:11.2px;color:#fff;font-weight:700;font-family:'Liberation Sans', sans-serif;transform:scaleX(1.0500)">Home</span>
<span id="t7" class="t" style="left:161.0px;top:52.92px;font-size:11.2px;color:#fff;font-weight:400;font-family:'Liberation Sans', sans-serif;transform:scaleX(0.9908)">Page Layout</span>
<span id="t8" class="t" style="left:241.5px;top:52.92px;font-size:11.2px;color:#fff;font-weight:400;font-family:'Liberation Sans', sans-serif;transform:scaleX(1.0069)">Formulas</span>
<span id="t9" class="t" style="left:305.3px;top:52.92px;font-size:11.2px;color:#fff;font-weight:400;font-family:'Liberation Sans', sans-serif;transform:scaleX(1.0215)">Data</span>
<span id="t10" class="t" style="left:345.5px;top:52.92px;font-size:11.2px;color:#fff;font-weight:400;font-family:'Liberation Sans', sans-serif;transform:scaleX(0.9662)">Review</span>
<span id="t11" class="t" style="left:398.5px;top:52.92px;font-size:11.2px;color:#fff;font-weight:400;font-family:'Liberation Sans', sans-serif;transform:scaleX(1.0084)">View</span>
<span id="t12" class="t" style="left:439.8px;top:52.92px;font-size:11.2px;color:#fff;font-weight:400;font-family:'Liberation Sans', sans-serif;transform:scaleX(1.0284)">Developer</span>
<span id="t13" class="t" style="left:510.3px;top:52.92px;font-size:11.2px;color:#fff;font-weight:400;font-family:'Liberation Sans', sans-serif;transform:scaleX(1.0275)">Help</span>
<span id="t14" class="t" style="left:551.8px;top:52.92px;font-size:11.2px;color:#fff;font-weight:400;font-family:'Liberation Sans', sans-serif;transform:scaleX(1.0125)">Power Pivot</span>
<span id="t15" class="t" style="left:29.3px;top:108.53px;font-size:10.6px;color:#fff;font-weight:400;font-family:'Liberation Sans', sans-serif;transform:scaleX(0.8904)">Paste</span>
<span id="t16" class="t" style="left:32.3px;top:143.87px;font-size:9.6px;color:#f0f0f0;font-weight:400;font-family:'Liberation Sans', sans-serif;transform:scaleX(0.9831)">Clipboard</span>
<span id="t17" class="t" style="left:116.8px;top:106.23px;font-size:10.6px;color:#fff;font-weight:400;font-family:'Liberation Sans', sans-serif;transform:scaleX(0.9868)">Font</span>
<span id="t18" class="t" style="left:157.8px;top:106.23px;font-size:10.6px;color:#fff;font-weight:400;font-family:'Liberation Sans', sans-serif;transform:scaleX(1.0322)">Alignment</span>
<span id="t19" class="t" style="left:221.8px;top:106.23px;font-size:10.6px;color:#fff;font-weight:400;font-family:'Liberation Sans', sans-serif;transform:scaleX(1.0063)">Number</span>
<span id="t20" class="t" style="left:295.5px;top:79.23px;font-size:10.6px;color:#fff;font-weight:400;font-family:'Liberation Sans', sans-serif;transform:scaleX(1.0125)">Conditional Formatting</span>
<span id="t21" class="t" style="left:295.5px;top:102.23px;font-size:10.6px;color:#fff;font-weight:400;font-family:'Liberation Sans', sans-serif;transform:scaleX(0.9691)">Format as Table</span>
<span id="t22" class="t" style="left:295.5px;top:124.73px;font-size:10.6px;color:#fff;font-weight:400;font-family:'Liberation Sans', sans-serif;transform:scaleX(0.9176)">Cell Styles</span>
<span id="t23" class="t" style="left:335.5px;top:144.17px;font-size:9.6px;color:#f0f0f0;font-weight:400;font-family:'Liberation Sans', sans-serif;transform:scaleX(0.8945)">Styles</span>
<span id="t24" class="t" style="left:441.0px;top:106.03px;font-size:10.6px;color:#fff;font-weight:400;font-family:'Liberation Sans', sans-serif;transform:scaleX(0.9014)">Cells</span>
<span id="t25" class="t" style="left:482.8px;top:106.23px;font-size:10.6px;color:#fff;font-weight:400;font-family:'Liberation Sans', sans-serif;transform:scaleX(0.9851)">Editing</span>
<span id="t26" class="t" style="left:531.8px;top:107.53px;font-size:10.6px;color:#fff;font-weight:400;font-family:'Liberation Sans', sans-serif;transform:scaleX(1.0335)">Add-ins</span>
<span id="t27" class="t" style="left:534.3px;top:144.17px;font-size:9.6px;color:#f0f0f0;font-weight:400;font-family:'Liberation Sans', sans-serif;transform:scaleX(0.9709)">Add-ins</span>
<span id="t28" class="t" style="left:586.8px;top:107.73px;font-size:10.6px;color:#fff;font-weight:400;font-family:'Liberation Sans', sans-serif;transform:scaleX(0.9661)">Analyze</span>
<span id="t29" class="t" style="left:594.3px;top:121.53px;font-size:10.6px;color:#fff;font-weight:400;font-family:'Liberation Sans', sans-serif;transform:scaleX(0.9568)">Data</span>
<span id="t30" class="t" style="left:17.0px;top:171.80px;font-size:13px;color:#fff;font-weight:400;font-family:'Liberation Sans', sans-serif;-webkit-text-stroke:0;transform:scaleX(1.0959)">C1</span>
<span id="t31" class="t" style="left:167.6px;top:169.60px;font-size:15px;color:#fff;font-weight:400;font-family:'Liberation Serif', serif;font-style:italic;-webkit-text-stroke:0;transform:scaleX(1.0620)">fx</span>
<span id="t76" class="t" style="left:110.2px;top:518.22px;font-size:12.5px;color:#fff;font-weight:400;font-family:'Liberation Sans', sans-serif;transform:scaleX(0.9136)">Sheet1</span>
<span id="t77" class="t" style="left:168.4px;top:518.22px;font-size:12.5px;color:#fff;font-weight:400;font-family:'Liberation Sans', sans-serif;transform:scaleX(0.9413)">Sheet2</span>
<span id="t78" class="t" style="left:228.4px;top:518.22px;font-size:12.5px;color:#fff;font-weight:400;font-family:'Liberation Sans', sans-serif;transform:scaleX(0.9287)">Sheet3</span>
<span id="t79" class="t" style="left:288.9px;top:518.22px;font-size:12.5px;color:#fff;font-weight:400;font-family:'Liberation Sans', sans-serif;transform:scaleX(0.9464)">Sheet4</span>
<span id="t80" class="t" style="left:16.0px;top:543.01px;font-size:9.2px;color:#e8e8e8;font-weight:400;font-family:'Liberation Sans', sans-serif;transform:scaleX(0.9287)">Ready</span>
<span id="t81" class="t" style="left:100.3px;top:542.80px;font-size:9.8px;color:#fff;font-weight:700;font-family:'Liberation Sans', sans-serif;transform:scaleX(0.9386)">Accessibility: Investigate</span>
<span id="t82" class="t" style="left:683.6px;top:542.71px;font-size:9.2px;color:#e8e8e8;font-weight:400;font-family:'Liberation Sans', sans-serif;transform:scaleX(0.9603)">100%</span>
</div>
<div class="a" style="left:0;top:0;width:706px;height:509px;overflow:hidden;will-change:transform">
<span id="t32" class="t" style="left:61.2px;top:221.65px;font-size:11.4px;color:#fff;font-weight:400;transform-origin:50% 50%;transform:translateX(-50%) scaleX(1.0)">A</span>
<span id="t33" class="t" style="left:148.0px;top:221.65px;font-size:11.4px;color:#fff;font-weight:400;transform-origin:50% 50%;transform:translateX(-50%) scaleX(1.0)">B</span>
<span id="t34" class="t" style="left:261.0px;top:221.65px;font-size:11.4px;color:#fff;font-weight:400;transform-origin:50% 50%;transform:translateX(-50%) scaleX(1.0)">C</span>
<span id="t35" class="t" style="left:370.6px;top:221.65px;font-size:11.4px;color:#fff;font-weight:400;transform-origin:50% 50%;transform:translateX(-50%) scaleX(1.0)">D</span>
<span id="t36" class="t" style="left:479.9px;top:221.65px;font-size:11.4px;color:#fff;font-weight:400;transform-origin:50% 50%;transform:translateX(-50%) scaleX(1.0)">E</span>
<span id="t37" class="t" style="left:567.1px;top:221.65px;font-size:11.4px;color:#fff;font-weight:400;transform-origin:50% 50%;transform:translateX(-50%) scaleX(1.0)">F</span>
<span id="t38" class="t" style="left:628.2px;top:221.65px;font-size:11.4px;color:#fff;font-weight:400;transform-origin:50% 50%;transform:translateX(-50%) scaleX(1.0)">G</span>
<span id="t39" class="t" style="left:689.2px;top:221.65px;font-size:11.4px;color:#fff;font-weight:400;transform-origin:50% 50%;transform:translateX(-50%) scaleX(1.0)">H</span>
<span id="t40" class="t" style="left:18.2px;top:240.35px;font-size:12.2px;color:#fff;font-weight:400;transform-origin:50% 50%;transform:translateX(-50%) scaleX(0.9)">1</span>
<span id="t41" class="t" style="left:18.2px;top:259.13px;font-size:12.2px;color:#fff;font-weight:400;transform-origin:50% 50%;transform:translateX(-50%) scaleX(0.9)">2</span>
<span id="t42" class="t" style="left:18.2px;top:277.91px;font-size:12.2px;color:#fff;font-weight:400;transform-origin:50% 50%;transform:translateX(-50%) scaleX(0.9)">3</span>
<span id="t43" class="t" style="left:18.2px;top:296.69px;font-size:12.2px;color:#fff;font-weight:400;transform-origin:50% 50%;transform:translateX(-50%) scaleX(0.9)">4</span>
<span id="t44" class="t" style="left:18.2px;top:315.47px;font-size:12.2px;color:#fff;font-weight:400;transform-origin:50% 50%;transform:translateX(-50%) scaleX(0.9)">5</span>
<span id="t45" class="t" style="left:18.2px;top:334.25px;font-size:12.2px;color:#fff;font-weight:400;transform-origin:50% 50%;transform:translateX(-50%) scaleX(0.9)">6</span>
<span id="t46" class="t" style="left:18.2px;top:353.03px;font-size:12.2px;color:#fff;font-weight:400;transform-origin:50% 50%;transform:translateX(-50%) scaleX(0.9)">7</span>
<span id="t47" class="t" style="left:18.2px;top:371.81px;font-size:12.2px;color:#fff;font-weight:400;transform-origin:50% 50%;transform:translateX(-50%) scaleX(0.9)">8</span>
<span id="t48" class="t" style="left:18.2px;top:390.59px;font-size:12.2px;color:#fff;font-weight:400;transform-origin:50% 50%;transform:translateX(-50%) scaleX(0.9)">9</span>
<span id="t49" class="t" style="left:18.2px;top:409.37px;font-size:12.2px;color:#fff;font-weight:400;transform-origin:50% 50%;transform:translateX(-50%) scaleX(0.9)">10</span>
<span id="t50" class="t" style="left:18.2px;top:428.15px;font-size:12.2px;color:#fff;font-weight:400;transform-origin:50% 50%;transform:translateX(-50%) scaleX(0.9)">11</span>
<span id="t51" class="t" style="left:18.2px;top:446.93px;font-size:12.2px;color:#fff;font-weight:400;transform-origin:50% 50%;transform:translateX(-50%) scaleX(0.9)">12</span>
<span id="t52" class="t" style="left:18.2px;top:465.71px;font-size:12.2px;color:#fff;font-weight:400;transform-origin:50% 50%;transform:translateX(-50%) scaleX(0.9)">13</span>
<span id="t53" class="t" style="left:18.2px;top:484.49px;font-size:12.2px;color:#fff;font-weight:400;transform-origin:50% 50%;transform:translateX(-50%) scaleX(0.9)">14</span>
<span id="t54" class="t" style="left:18.2px;top:503.27px;font-size:12.2px;color:#fff;font-weight:400;transform-origin:50% 50%;transform:translateX(-50%) scaleX(0.9)">15</span>
<span id="t55" class="t" style="left:94.2px;top:259.09px;font-size:12.6px;color:#2a1208;font-weight:400;font-family:'Liberation Sans', sans-serif;transform:scaleX(0.9796)">Executive Names</span>
<span id="t56" class="t" style="left:320.2px;top:259.09px;font-size:12.6px;color:#2a1208;font-weight:400;font-family:'Liberation Sans', sans-serif;transform:scaleX(0.9674)">Sales Target</span>
<span id="t57" class="t" style="left:425.9px;top:259.09px;font-size:12.6px;color:#2a1208;font-weight:400;font-family:'Liberation Sans', sans-serif;transform:scaleX(0.9582)">Date of Joining</span>
<span id="t58" class="t" style="left:94.2px;top:277.87px;font-size:12.6px;color:#1a1a1a;font-weight:400;font-family:'Liberation Sans', sans-serif;transform:scaleX(0.9582)">Giana</span>
<span id="t59" class="t" style="left:401.0px;top:277.87px;font-size:12.6px;color:#1a1a1a;font-weight:400;font-family:'Liberation Sans', sans-serif;transform:scaleX(0.9947)">135</span>
<span id="t60" class="t" style="left:470.4px;top:277.87px;font-size:12.6px;color:#1a1a1a;font-weight:400;font-family:'Liberation Sans', sans-serif;transform:scaleX(0.9982)">20-07-2024</span>
<span id="t61" class="t" style="left:94.2px;top:296.65px;font-size:12.6px;color:#1a1a1a;font-weight:400;font-family:'Liberation Sans', sans-serif;transform:scaleX(0.9676)">Henry</span>
<span id="t62" class="t" style="left:407.8px;top:296.65px;font-size:12.6px;color:#1a1a1a;font-weight:400;font-family:'Liberation Sans', sans-serif;transform:scaleX(1.0063)">78</span>
<span id="t63" class="t" style="left:470.4px;top:296.65px;font-size:12.6px;color:#1a1a1a;font-weight:400;font-family:'Liberation Sans', sans-serif;transform:scaleX(0.9982)">24-07-2024</span>
<span id="t64" class="t" style="left:94.2px;top:315.43px;font-size:12.6px;color:#1a1a1a;font-weight:400;font-family:'Liberation Sans', sans-serif;transform:scaleX(0.9232)">Joseph</span>
<span id="t65" class="t" style="left:401.0px;top:315.43px;font-size:12.6px;color:#1a1a1a;font-weight:400;font-family:'Liberation Sans', sans-serif;transform:scaleX(0.9947)">652</span>
<span id="t66" class="t" style="left:470.4px;top:315.43px;font-size:12.6px;color:#1a1a1a;font-weight:400;font-family:'Liberation Sans', sans-serif;transform:scaleX(0.9982)">21-09-2021</span>
<span id="t67" class="t" style="left:94.2px;top:334.21px;font-size:12.6px;color:#1a1a1a;font-weight:400;font-family:'Liberation Sans', sans-serif;transform:scaleX(0.9693)">Jishu</span>
<span id="t68" class="t" style="left:401.0px;top:334.21px;font-size:12.6px;color:#1a1a1a;font-weight:400;font-family:'Liberation Sans', sans-serif;transform:scaleX(0.9947)">921</span>
<span id="t69" class="t" style="left:470.4px;top:334.21px;font-size:12.6px;color:#1a1a1a;font-weight:400;font-family:'Liberation Sans', sans-serif;transform:scaleX(0.9982)">25-10-2023</span>
<span id="t70" class="t" style="left:94.2px;top:352.99px;font-size:12.6px;color:#1a1a1a;font-weight:400;font-family:'Liberation Sans', sans-serif;transform:scaleX(0.9704)">John</span>
<span id="t71" class="t" style="left:394.2px;top:352.99px;font-size:12.6px;color:#1a1a1a;font-weight:400;font-family:'Liberation Sans', sans-serif;transform:scaleX(0.9883)">2786</span>
<span id="t72" class="t" style="left:470.4px;top:352.99px;font-size:12.6px;color:#1a1a1a;font-weight:400;font-family:'Liberation Sans', sans-serif;transform:scaleX(0.9982)">30-08-2024</span>
<span id="t73" class="t" style="left:94.2px;top:371.77px;font-size:12.6px;color:#1a1a1a;font-weight:400;font-family:'Liberation Sans', sans-serif;transform:scaleX(1.0224)">Daniel</span>
<span id="t74" class="t" style="left:394.2px;top:371.77px;font-size:12.6px;color:#1a1a1a;font-weight:400;font-family:'Liberation Sans', sans-serif;transform:scaleX(1.0225)">1167</span>
<span id="t75" class="t" style="left:470.4px;top:371.77px;font-size:12.6px;color:#1a1a1a;font-weight:400;font-family:'Liberation Sans', sans-serif;transform:scaleX(0.9982)">16-03-2023</span>
</div>
</body></html>
